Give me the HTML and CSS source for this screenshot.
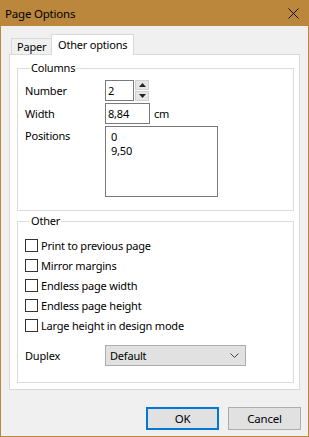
FILE: index.html
```html
<!DOCTYPE html>
<html lang="en">
<head>
    <meta charset="UTF-8">
    <title>Page Options</title>
    <link rel="stylesheet" href="styles.css">
</head>
<body>
    <div class="window">
        <div class="titlebar">
            <span class="title">Page Options</span>
            <svg class="close" width="11" height="11" viewBox="0 0 11 11">
                <path d="M0.5 0.5 L10.5 10.5 M10.5 0.5 L0.5 10.5" stroke="#111" stroke-width="1"/>
            </svg>
        </div>
        <div class="client">
            <div class="tabs">
                <div class="tab">Paper</div>
                <div class="tab active">Other options</div>
            </div>
            <div class="panel">
                <fieldset class="group columns">
                    <legend>Columns</legend>
                    <div class="row">
                        <span class="label">Number</span>
                        <div class="field num">2</div>
                        <div class="spin">
                            <div class="spin-btn"><svg width="7" height="4" viewBox="0 0 7 4"><path d="M0 4 L3.5 0 L7 4 Z" fill="#222"/></svg></div>
                            <div class="spin-btn"><svg width="7" height="4" viewBox="0 0 7 4"><path d="M0 0 L3.5 4 L7 0 Z" fill="#222"/></svg></div>
                        </div>
                    </div>
                    <div class="row">
                        <span class="label">Width</span>
                        <div class="field width">8,84</div>
                        <span class="unit">cm</span>
                    </div>
                    <div class="row top">
                        <span class="label">Positions</span>
                        <div class="field list">0<br>9,50</div>
                    </div>
                </fieldset>
                <fieldset class="group other">
                    <legend>Other</legend>
                    <div class="check"><span class="box"></span>Print to previous page</div>
                    <div class="check"><span class="box"></span>Mirror margins</div>
                    <div class="check"><span class="box"></span>Endless page width</div>
                    <div class="check"><span class="box"></span>Endless page height</div>
                    <div class="check"><span class="box"></span>Large height in design mode</div>
                    <div class="row duplex">
                        <span class="label">Duplex</span>
                        <div class="select">
                            <span>Default</span>
                            <svg width="9" height="5" viewBox="0 0 9 5"><path d="M0.5 0.5 L4.5 4.5 L8.5 0.5" fill="none" stroke="#444" stroke-width="1"/></svg>
                        </div>
                    </div>
                </fieldset>
            </div>
            <div class="buttons">
                <button class="btn default">OK</button>
                <button class="btn">Cancel</button>
            </div>
        </div>
    </div>
</body>
</html>
```

FILE: styles.css
```css
body {
    margin: 0;
    font-family: "Noto Sans", "Open Sans", sans-serif;
    font-size: 11px;
    letter-spacing: -0.2px;
    color: #000;
}
.window {
    width: 309px;
    height: 437px;
    box-sizing: border-box;
    border: 1px solid #ba873c;
    background: #f0f0f0;
}
.titlebar {
    height: 25px;
    background: #ba873c;
    display: flex;
    align-items: center;
    padding-left: 4px;
    font-size: 11.5px;
}
.title {
    flex: 1;
    line-height: 16px;
}
.close {
    margin-right: 9px;
}
.client {
    padding: 8px 8px 0 8px;
}
.tabs {
    display: flex;
    align-items: flex-end;
    margin-left: 2px;
    height: 20px;
}
.tab {
    box-sizing: border-box;
    width: 41px;
    height: 16px;
    line-height: 15px;
    padding-left: 5px;
    border: 1px solid #d9d9d9;
    border-bottom: none;
    background: #f0f0f0;
}
.tab.active {
    position: relative;
    width: 83px;
    height: 21px;
    line-height: 20px;
    padding-left: 6px;
    margin-bottom: -1px;
    margin-left: -1px;
    background: #fff;
}
.panel {
    box-sizing: border-box;
    height: 336px;
    border: 1px solid #d9d9d9;
    background: #fff;
    padding: 5px 5px 0 7px;
}
.group {
    margin: 0;
    border: 1px solid #dcdcdc;
    padding: 4px 8px 11px 7px;
}
.group legend {
    line-height: 16px;
    padding: 0 1px;
    margin-left: 5px;
}
.group.other {
    margin-top: 2px;
    padding-top: 6px;
    padding-bottom: 16px;
}
.row {
    display: flex;
    align-items: center;
    margin-bottom: 2px;
}
.row.top {
    align-items: flex-start;
    margin-top: 2px;
}
.label {
    width: 80px;
    line-height: 16px;
}
.row.top .label {
    padding-top: 2px;
}
.field {
    box-sizing: border-box;
    height: 21px;
    border: 1px solid #7a7a7a;
    background: #fff;
    padding: 1px 2px;
    line-height: 17px;
}
.field.num {
    width: 29px;
}
.field.width {
    width: 45px;
}
.field.list {
    width: 113px;
    height: 71px;
    padding: 3px 5px;
    line-height: 14px;
}
.unit {
    margin-left: 4px;
}
.spin {
    margin-left: 1px;
    display: flex;
    flex-direction: column;
    gap: 1px;
}
.spin-btn {
    box-sizing: border-box;
    width: 14px;
    height: 10px;
    background: #e6e6e6;
    border: 1px solid #d0d0d0;
    display: flex;
    align-items: center;
    justify-content: center;
}
.check {
    display: flex;
    align-items: center;
    height: 20px;
}
.box {
    box-sizing: border-box;
    width: 13px;
    height: 13px;
    border: 1px solid #333;
    background: #fff;
    margin-right: 3px;
}
.row.duplex {
    margin-top: 10px;
    margin-bottom: 0;
}
.select {
    box-sizing: border-box;
    width: 141px;
    height: 21px;
    border: 1px solid #adadad;
    background: #e1e1e1;
    display: flex;
    align-items: center;
    justify-content: space-between;
    padding: 0 6px 0 4px;
}
.buttons {
    display: flex;
    justify-content: flex-end;
    gap: 9px;
    margin-top: 17px;
    margin-right: -1px;
}
.btn {
    box-sizing: border-box;
    width: 73px;
    height: 23px;
    font-family: inherit;
    font-size: 11.5px;
    letter-spacing: inherit;
    color: #000;
    background: #e1e1e1;
    border: 1px solid #adadad;
    padding: 0;
}
.btn.default {
    border: 2px solid #0078d7;
}
```
